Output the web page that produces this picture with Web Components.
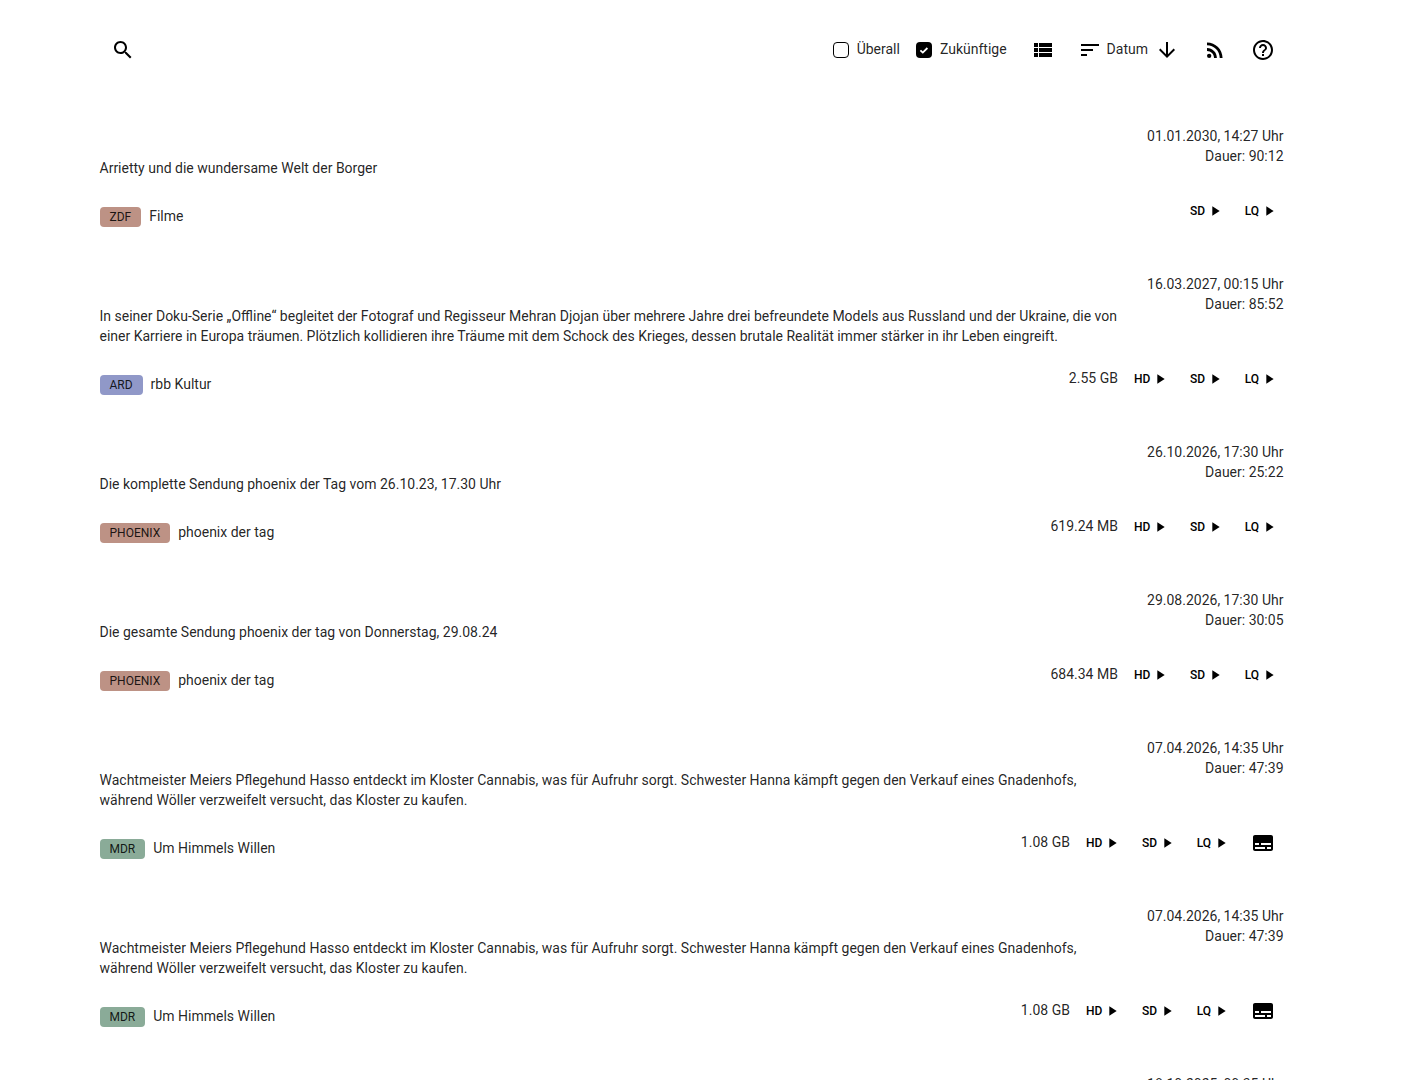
<!DOCTYPE html>
<html lang="de">
<head>
<meta charset="utf-8">
<title>Mediathek</title>
<style>
    html, body { margin: 0; background: #fff; }
    body {
        height: 1080px;
        overflow: hidden;
        font-family: Roboto, "Liberation Sans", sans-serif;
        font-size: 14px;
        line-height: 20px;
        color: rgba(0, 0, 0, .87);
    }
    main-page { display: block; }
</style>
</head>
<body>
<main-page>
    <media-toolbar></media-toolbar>

    <media-item date="01.01.2030, 14:27 Uhr" duration="90:12" chip="ZDF" tone="#bd9285" topic="Filme" links="SD LQ">Arrietty und die wundersame Welt der Borger</media-item>
    <media-item date="16.03.2027, 00:15 Uhr" duration="85:52" chip="ARD" tone="#9098c8" topic="rbb Kultur" size="2.55 GB" links="HD SD LQ">In seiner Doku-Serie „Offline“ begleitet der Fotograf und Regisseur Mehran Djojan über mehrere Jahre drei befreundete Models aus Russland und der Ukraine, die von einer Karriere in Europa träumen. Plötzlich kollidieren ihre Träume mit dem Schock des Krieges, dessen brutale Realität immer stärker in ihr Leben eingreift.</media-item>
    <media-item date="26.10.2026, 17:30 Uhr" duration="25:22" chip="PHOENIX" tone="#bd9285" topic="phoenix der tag" size="619.24 MB" links="HD SD LQ">Die komplette Sendung phoenix der Tag vom 26.10.23, 17.30 Uhr</media-item>
    <media-item date="29.08.2026, 17:30 Uhr" duration="30:05" chip="PHOENIX" tone="#bd9285" topic="phoenix der tag" size="684.34 MB" links="HD SD LQ">Die gesamte Sendung phoenix der tag von Donnerstag, 29.08.24</media-item>
    <media-item date="07.04.2026, 14:35 Uhr" duration="47:39" chip="MDR" tone="#8aab98" topic="Um Himmels Willen" size="1.08 GB" links="HD SD LQ" subtitles>Wachtmeister Meiers Pflegehund Hasso entdeckt im Kloster Cannabis, was für Aufruhr sorgt. Schwester Hanna kämpft gegen den Verkauf eines Gnadenhofs, während Wöller verzweifelt versucht, das Kloster zu kaufen.</media-item>
    <media-item date="07.04.2026, 14:35 Uhr" duration="47:39" chip="MDR" tone="#8aab98" topic="Um Himmels Willen" size="1.08 GB" links="HD SD LQ" subtitles>Wachtmeister Meiers Pflegehund Hasso entdeckt im Kloster Cannabis, was für Aufruhr sorgt. Schwester Hanna kämpft gegen den Verkauf eines Gnadenhofs, während Wöller verzweifelt versucht, das Kloster zu kaufen.</media-item>
    <media-item date="18.10.2025, 09:35 Uhr" duration="44:10" chip="ARD" tone="#9098c8" topic="Tagesschau" links="SD LQ">Tagesschau</media-item>
</main-page>

<script>
const ICONS = {
    search: 'M15.5 14h-.79l-.28-.27C15.41 12.59 16 11.11 16 9.5 16 5.91 13.09 3 9.5 3S3 5.91 3 9.5 5.91 16 9.5 16c1.61 0 3.09-.59 4.23-1.57l.27.28v.79l5 4.99L20.49 19l-4.99-5zm-6 0C7.01 14 5 11.99 5 9.5S7.01 5 9.5 5 14 7.01 14 9.5 11.99 14 9.5 14z',
    list: 'M3 14h4v-4H3v4zm0 5h4v-4H3v4zM3 9h4V5H3v4zm5 5h13v-4H8v4zm0 5h13v-4H8v4zM8 5v4h13V5H8z',
    sort: 'M3 18h6v-2H3v2zM3 6v2h18V6H3zm0 7h12v-2H3v2z',
    down: 'M20 12l-1.41-1.41L13 16.17V4h-2v12.17l-5.58-5.59L4 12l8 8 8-8z',
    rss: 'M6.18 15.64a2.18 2.18 0 1 0 0 4.36 2.18 2.18 0 0 0 0-4.36zM4 4.44v2.83c7.03 0 12.73 5.7 12.73 12.73h2.83c0-8.59-6.97-15.56-15.56-15.56zm0 5.66v2.83c3.9 0 7.07 3.17 7.07 7.07h2.83c0-5.47-4.43-9.9-9.9-9.9z',
    help: 'M11 18h2v-2h-2v2zm1-16C6.48 2 2 6.48 2 12s4.48 10 10 10 10-4.48 10-10S17.52 2 12 2zm0 18c-4.41 0-8-3.59-8-8s3.59-8 8-8 8 3.59 8 8-3.59 8-8 8zm0-14c-2.21 0-4 1.79-4 4h2c0-1.1.9-2 2-2s2 .9 2 2c0 2-3 1.75-3 5h2c0-2.25 3-2.5 3-5 0-2.21-1.79-4-4-4z',
    subtitles: 'M20 4H4c-1.1 0-2 .9-2 2v12c0 1.1.9 2 2 2h16c1.1 0 2-.9 2-2V6c0-1.1-.9-2-2-2zM4 12h4v2H4v-2zm10 6H4v-2h10v2zm6 0h-4v-2h4v2zm0-4H10v-2h10v2z',
    play: 'M8 5v14l11-7z'
};

class MatIcon extends HTMLElement {
    connectedCallback() {
        const size = this.getAttribute('size') || 24;
        this.attachShadow({mode: 'open'}).innerHTML = `
        <style>
            :host { display: block; width: ${size}px; height: ${size}px; flex: none; }
            svg { display: block; width: 100%; height: 100%; fill: #000; }
        </style>
        <svg viewBox="0 0 24 24"><path d="${ICONS[this.getAttribute('name')]}"></path></svg>`;
    }
}
customElements.define('mat-icon', MatIcon);

class CheckField extends HTMLElement {
    connectedCallback() {
        const on = this.hasAttribute('checked');
        this.attachShadow({mode: 'open'}).innerHTML = `
        <style>
            :host { display: flex; align-items: center; gap: 7px; }
            svg { display: block; width: 18px; height: 18px; }
            span { position: relative; top: -1px; }
        </style>
        <svg viewBox="0 0 18 18">
            ${on
                ? '<rect x="1" y="1" width="16" height="16" rx="4" fill="#000"/><path d="M5.4 9.3l2.4 2.3 4.6-4.6" fill="none" stroke="#fff" stroke-width="1.8"/>'
                : '<rect x="1.5" y="1.5" width="15" height="15" rx="3.5" fill="none" stroke="#000" stroke-width="1"/>'}
        </svg>
        <span><slot></slot></span>`;
    }
}
customElements.define('check-field', CheckField);

class MediaToolbar extends HTMLElement {
    connectedCallback() {
        this.attachShadow({mode: 'open'}).innerHTML = `
        <style>
            :host {
                display: flex;
                align-items: center;
                height: 48px;
                padding: 26px 119px 0 99px;
                margin-bottom: 52px;
            }
            .btn {
                display: flex;
                align-items: center;
                justify-content: center;
                width: 48px;
                height: 48px;
                flex: none;
            }
            .right { margin-left: auto; display: flex; align-items: center; }
            .checks { display: flex; gap: 15px; margin-right: 12px; }
            .sort { display: flex; align-items: center; margin-left: 11px; }
            .sort span { margin: -2px 0 0 5px; }
        </style>
        <div class="btn"><mat-icon name="search"></mat-icon></div>
        <div class="right">
            <div class="checks">
                <check-field>Überall</check-field>
                <check-field checked>Zukünftige</check-field>
            </div>
            <div class="btn"><mat-icon name="list"></mat-icon></div>
            <div class="sort">
                <mat-icon name="sort"></mat-icon>
                <span>Datum</span>
            </div>
            <div class="btn" style="margin-left:-5px"><mat-icon name="down"></mat-icon></div>
            <div class="btn"><mat-icon name="rss"></mat-icon></div>
            <div class="btn"><mat-icon name="help"></mat-icon></div>
        </div>`;
    }
}
customElements.define('media-toolbar', MediaToolbar);

class StationChip extends HTMLElement {
    connectedCallback() {
        this.attachShadow({mode: 'open'}).innerHTML = `
        <style>
            :host {
                display: block;
                height: 20px;
                margin-top: 1px;
                padding: 0 10px;
                border-radius: 4px;
                font-size: 12px;
                line-height: 20px;
                background: ${this.getAttribute('tone')};
            }
        </style>
        <slot></slot>`;
    }
}
customElements.define('station-chip', StationChip);

class QualityLink extends HTMLElement {
    connectedCallback() {
        this.attachShadow({mode: 'open'}).innerHTML = `
        <style>
            :host {
                display: flex;
                align-items: center;
                gap: 2px;
                font-size: 12px;
                font-weight: 500;
                color: #000;
            }
        </style>
        <slot></slot><mat-icon name="play" size="16"></mat-icon>`;
    }
}
customElements.define('quality-link', QualityLink);

class MediaItem extends HTMLElement {
    connectedCallback() {
        const a = n => this.getAttribute(n);
        const links = a('links').split(' ').map(l => `<quality-link>${l}</quality-link>`).join('');
        this.attachShadow({mode: 'open'}).innerHTML = `
        <style>
            :host { display: block; margin: 0 122.5px 36px 99.5px; }
            .top { display: flex; justify-content: space-between; }
            .desc { width: 1020px; padding-top: 32px; }
            .meta { text-align: right; white-space: nowrap; }
            .bottom { display: flex; justify-content: space-between; margin-top: 16px; height: 44px; }
            .tags { display: flex; align-items: center; gap: 8px; height: 44px; }
            .actions { display: flex; align-items: center; height: 34px; margin-right: -3.5px; }
            .size { margin-right: 16px; position: relative; top: -1px; }
            .links { display: flex; gap: 21.7px; margin-right: 9.9px; }
            .sub { width: 48px; display: flex; justify-content: center; }
        </style>
        <div class="top">
            <div class="desc"><slot></slot></div>
            <div class="meta">${a('date')}<br>Dauer: ${a('duration')}</div>
        </div>
        <div class="bottom">
            <div class="tags">
                <station-chip tone="${a('tone')}">${a('chip')}</station-chip>
                <span>${a('topic')}</span>
            </div>
            <div class="actions">
                ${a('size') ? `<span class="size">${a('size')}</span>` : ''}
                <div class="links">${links}</div>
                ${this.hasAttribute('subtitles') ? '<div class="sub"><mat-icon name="subtitles"></mat-icon></div>' : ''}
            </div>
        </div>`;
    }
}
customElements.define('media-item', MediaItem);
</script>
</body>
</html>
